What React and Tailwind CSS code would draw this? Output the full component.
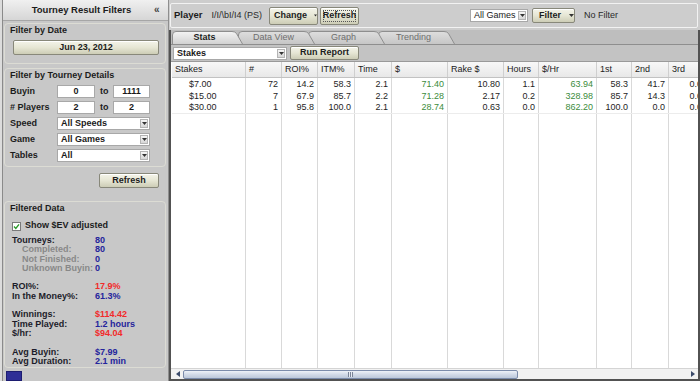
import React from 'react';

const beige =
  'bg-gradient-to-b from-[#f4f4ea] via-[#e6e6d4] to-[#cdcdb6] border border-[#88887a] rounded-[2px] shadow-[inset_0_1px_0_#ffffff]';

const Caret = ({ color = '#333' }) => (
  <svg width="5" height="3" viewBox="0 0 5 3">
    <path d="M0 0H5L2.5 3Z" fill={color} />
  </svg>
);

const Select = ({ value, className = '', bold = false }) => (
  <div className={`h-[13px] bg-white border border-[#a8a8a8] flex items-center ${className}`}>
    <span className={`flex-1 pl-[3px] text-[9px] leading-none text-[#1a1a1a] truncate ${bold ? 'font-bold' : ''}`}>
      {value}
    </span>
    <span className="w-[8px] h-[9px] mr-[1px] bg-gradient-to-b from-[#f6f6f6] to-[#d6d6d6] border border-[#b4b4b4] flex items-center justify-center">
      <Caret />
    </span>
  </div>
);

const Field = ({ value, className = '' }) => (
  <div className={`h-[13px] bg-white border border-[#a8a8a8] flex items-center justify-center text-[9px] font-bold leading-none text-[#1a1a1a] ${className}`}>
    {value}
  </div>
);

const summary = [
  { label: 'Tourneys:', value: '80', tone: 'blue' },
  { label: 'Completed:', value: '80', tone: 'blue', sub: true },
  { label: 'Not Finished:', value: '0', tone: 'blue', sub: true },
  { label: 'Unknown Buyin:', value: '0', tone: 'blue', sub: true },
  null,
  { label: 'ROI%:', value: '17.9%', tone: 'red' },
  { label: 'In the Money%:', value: '61.3%', tone: 'blue' },
  null,
  { label: 'Winnings:', value: '$114.42', tone: 'red' },
  { label: 'Time Played:', value: '1.2 hours', tone: 'blue' },
  { label: '$/hr:', value: '$94.04', tone: 'red' },
  null,
  { label: 'Avg Buyin:', value: '$7.99', tone: 'blue' },
  { label: 'Avg Duration:', value: '2.1 min', tone: 'blue' },
];

const columns = [
  { name: 'Stakes', w: 'w-[74px]' },
  { name: '#', w: 'w-[36px]' },
  { name: 'ROI%', w: 'w-[36px]' },
  { name: 'ITM%', w: 'w-[37px]' },
  { name: 'Time', w: 'w-[37px]' },
  { name: '$', w: 'w-[56px]', green: true },
  { name: 'Rake $', w: 'w-[56px]' },
  { name: 'Hours', w: 'w-[35px]' },
  { name: '$/Hr', w: 'w-[58px]', green: true },
  { name: '1st', w: 'w-[35px]' },
  { name: '2nd', w: 'w-[37px]' },
  { name: '3rd', w: 'w-[37px]' },
];

const rows = [
  ['$7.00', '72', '14.2', '58.3', '2.1', '71.40', '10.80', '1.1', '63.94', '58.3', '41.7', '0.0'],
  ['$15.00', '7', '67.9', '85.7', '2.2', '71.28', '2.17', '0.2', '328.98', '85.7', '14.3', '0.0'],
  ['$30.00', '1', '95.8', '100.0', '2.1', '28.74', '0.63', '0.0', '862.20', '100.0', '0.0', '0.0'],
];

const tabs = [
  { id: 'stats', label: 'Stats', active: true, cls: 'ml-[1px] w-[71px] z-[4]', w: 71 },
  { id: 'dataview', label: 'Data View', cls: '-ml-[5px] w-[77px] z-[3]', w: 77 },
  { id: 'graph', label: 'Graph', cls: '-ml-[7px] w-[77px] z-[2]', w: 77 },
  { id: 'trending', label: 'Trending', cls: '-ml-[7px] w-[77px] z-[1]', w: 77 },
];

const Tab = ({ tab }) => {
  const w = tab.w;
  const d = `M0.5 13 V4 Q0.5 0.5 4 0.5 H${w - 11} Q${w - 8} 0.5 ${w - 6.5} 2.5 L${w - 0.5} 13`;
  return (
    <div className={`relative h-[13px] shrink-0 ${tab.cls}`}>
      <svg className="absolute inset-0" width={w} height="13" viewBox={`0 0 ${w} 13`}>
        <defs>
          <linearGradient id={`tab-${tab.id}`} x1="0" y1="0" x2="0" y2="1">
            <stop offset="0" stopColor={tab.active ? '#f4f4f4' : '#dedede'} />
            <stop offset="1" stopColor={tab.active ? '#d2d2d2' : '#c6c6c6'} />
          </linearGradient>
        </defs>
        <path d={d} fill={`url(#tab-${tab.id})`} stroke="#8e8e8e" strokeWidth="1" />
      </svg>
      <div
        className={`relative h-full pr-[6px] flex items-center justify-center text-[9px] leading-none ${
          tab.active ? 'font-bold text-[#1e1e1e]' : 'text-[#6e6e6e]'
        }`}
      >
        {tab.label}
      </div>
    </div>
  );
};

const LeftPanel = () => (
  <aside className="w-[169px] shrink-0 h-full flex flex-col bg-[#dcdcdc] pl-[2px] border-r border-[#8e8e8e] overflow-hidden">
    <div className="flex-1 flex flex-col bg-[#c8c8c8] border-l border-[#8a8a8a]">
      {/* header */}
      <div className="h-[21px] shrink-0 flex items-center bg-gradient-to-b from-[#f0f0f0] to-[#d6d6d6] border-b border-[#a6a6a6]">
        <span className="flex-1 text-center pl-[6px] text-[9.5px] font-bold text-[#1c1c1c]">Tourney Result Filters</span>
        <span className="w-[14px] text-[10px] font-bold leading-none text-[#444]">«</span>
      </div>

      {/* filter by date */}
      <div className="mt-[2px] ml-[1px] mr-[2px] border border-[#dcdcd4] rounded-[4px] pt-[1px] pb-[8px]">
        <div className="h-[11px] pl-[5px] text-[9px] leading-[11px] font-bold text-[#1c1c1c]">Filter by Date</div>
        <div className={`${beige} mt-[4px] ml-[8px] w-[146px] h-[15px] flex items-center justify-center text-[9px] font-bold text-[#1c1c1c]`}>
          Jun 23, 2012
        </div>
      </div>

      {/* filter by tourney details */}
      <div className="mt-[4px] ml-[1px] mr-[2px] border border-[#dcdcd4] rounded-[4px] pt-[1px] pb-[4px]">
        <div className="h-[11px] pl-[5px] text-[9px] leading-[11px] font-bold text-[#1c1c1c]">Filter by Tourney Details</div>
        <div className="mt-[4px] flex flex-col gap-[3px] pl-[5px] text-[9px] leading-[13px] font-bold text-[#1c1c1c]">
          <div className="flex items-center h-[13px]">
            <span className="w-[47px]">Buyin</span>
            <Field value="0" className="w-[38px]" />
            <span className="w-[18px] pl-[5px]">to</span>
            <Field value="1111" className="w-[37px]" />
          </div>
          <div className="flex items-center h-[13px]">
            <span className="w-[47px]">#&nbsp;Players</span>
            <Field value="2" className="w-[38px]" />
            <span className="w-[18px] pl-[5px]">to</span>
            <Field value="2" className="w-[37px]" />
          </div>
          <div className="flex items-center h-[13px]">
            <span className="w-[47px]">Speed</span>
            <Select value="All Speeds" bold className="w-[93px]" />
          </div>
          <div className="flex items-center h-[13px]">
            <span className="w-[47px]">Game</span>
            <Select value="All Games" bold className="w-[93px]" />
          </div>
          <div className="flex items-center h-[13px]">
            <span className="w-[47px]">Tables</span>
            <Select value="All" bold className="w-[93px]" />
          </div>
        </div>
      </div>

      <div className={`${beige} mt-[6px] ml-[96px] w-[60px] h-[15px] flex items-center justify-center text-[9px] font-bold text-[#1c1c1c]`}>
        Refresh
      </div>

      {/* filtered data */}
      <div className="mt-[13px] ml-[1px] mr-[2px] flex-1 border border-[#dcdcd4] rounded-[4px] pt-[1px] pl-[7px]">
        <div className="h-[11px] -ml-[2px] text-[9px] leading-[11px] font-bold text-[#1c1c1c]">Filtered Data</div>
        <div className="mt-[7px] h-[10px] flex items-center gap-[4px] text-[9px] font-bold text-[#1c1c1c]">
          <span className="w-[9px] h-[9px] bg-white border border-[#7a7a7a] flex items-center justify-center">
            <svg width="7" height="7" viewBox="0 0 7 7">
              <path d="M1 3.6 L2.8 5.4 L6 1.4" fill="none" stroke="#2a9a2a" strokeWidth="1.4" />
            </svg>
          </span>
          Show $EV adjusted
        </div>
        <div className="mt-[5px] flex flex-col text-[9px] font-bold leading-[9.3px]">
          {summary.map((s, i) =>
            s ? (
              <div key={i} className="flex h-[9.3px] items-center whitespace-nowrap">
                <span className={`w-[83px] ${s.sub ? 'pl-[10px] text-[#888888]' : 'text-[#1c1c2a]'}`}>{s.label}</span>
                <span className={s.tone === 'red' ? 'text-[#f22a2a]' : 'text-[#24249c]'}>{s.value}</span>
              </div>
            ) : (
              <div key={i} className="h-[9.3px]" />
            )
          )}
        </div>
      </div>
      <div className="mt-[3px] ml-[3px] w-[16px] h-[10px] shrink-0 bg-[#2e2e96] border border-[#1c1c70]" />
    </div>
  </aside>
);

const StatsTable = () => (
  <div className="flex-1 flex flex-col bg-white overflow-hidden border-t border-[#9a9a9a] pl-[1px]">
    <div className="flex h-[16px] shrink-0 bg-gradient-to-b from-[#f8f8f8] to-[#e8e8e8] border-b border-[#c2c2c2]">
      {columns.map((c) => (
        <div key={c.name} className={`${c.w} shrink-0 border-r border-[#cfcfcf] pl-[3px] flex items-center text-[9px] text-[#222]`}>
          {c.name}
        </div>
      ))}
    </div>
    {rows.map((r, ri) => (
      <div key={ri} className={`flex h-[12px] shrink-0 ${ri === rows.length - 1 ? 'border-b border-[#ececec]' : ''}`}>
        {r.map((v, ci) => (
          <div
            key={ci}
            className={`${columns[ci].w} shrink-0 border-r border-[#d9d9d9] flex items-center text-[9px] leading-none ${
              ci === 0 ? 'pl-[17px]' : 'justify-end pr-[3px]'
            } ${columns[ci].green ? 'text-[#3c8c3c]' : 'text-[#1e1e1e]'}`}
          >
            {v}
          </div>
        ))}
      </div>
    ))}
    <div className="flex flex-1">
      {columns.map((c) => (
        <div key={c.name} className={`${c.w} shrink-0 border-r border-[#d9d9d9]`} />
      ))}
    </div>
  </div>
);

const Scrollbar = () => (
  <div className="h-[11px] shrink-0 flex items-center bg-[#f2f2f2] border-t border-[#d4d4d4]">
    <svg className="ml-[5px]" width="4" height="6" viewBox="0 0 4 6">
      <path d="M4 0V6L0 3Z" fill="#3a4a6a" />
    </svg>
    <div className="ml-[3px] w-[335px] h-[9px] rounded-[2px] border border-[#7c8cab] bg-gradient-to-b from-[#eef2f8] via-[#d2dae8] to-[#bcc8da] flex items-center justify-center">
      <span className="w-[5px] h-[5px] bg-[repeating-linear-gradient(90deg,#7a8498_0_1px,#e6eaf2_1px_2px)]" />
    </div>
    <div className="flex-1" />
    <svg className="mr-[3px]" width="4" height="6" viewBox="0 0 4 6">
      <path d="M0 0V6L4 3Z" fill="#3a4a6a" />
    </svg>
  </div>
);

export default function App() {
  return (
    <div className="w-[700px] h-[381px] flex overflow-hidden bg-[#c8c8c8] [font-family:'Liberation_Sans',Arial,sans-serif]">
      <LeftPanel />
      <main className="flex-1 h-full flex flex-col min-w-0">
        {/* player bar */}
        <div className="h-[30px] shrink-0 bg-[#cdcdcd] pt-[3px] pb-[2px] pl-[1px] pr-[2px]">
          <div className="h-full border border-[#f2f2f2] rounded-[2px] flex items-center pl-[3px]">
            <span className="text-[9.5px] font-bold text-[#1c1c1c]">Player</span>
            <span className="ml-[9px] text-[9px] text-[#2a2a2a]">I/I/\bI/I4 (PS)</span>
            <div className={`${beige} ml-[7px] w-[49px] h-[18px] flex items-center pl-[4px] gap-[7px]`}>
              <span className="text-[9px] font-bold text-[#1c1c1c]">Change</span>
              <Caret />
            </div>
            <div className={`${beige} ml-[2px] w-[39px] h-[18px] p-[2px]`}>
              <div className="h-full border border-dotted border-[#555] flex items-center justify-center text-[9px] font-bold text-[#1c1c1c]">
                Refresh
              </div>
            </div>
            <Select value="All Games" className="ml-[111px] w-[58px] h-[13px]" />
            <div className={`${beige} ml-[4px] w-[43px] h-[15px] flex items-center pl-[6px] gap-[8px]`}>
              <span className="text-[9px] font-bold text-[#1c1c1c]">Filter</span>
              <Caret />
            </div>
            <span className="ml-[9px] text-[9px] text-[#2a2a2a]">No Filter</span>
          </div>
        </div>

        <div className="flex-1 flex flex-col min-h-0 border-l-2 border-r-2 border-b-2 border-[#525252]">
          {/* tabs */}
          <div className="h-[14px] shrink-0 flex items-end bg-[#bebebe] overflow-hidden">
            {tabs.map((t) => (
              <Tab key={t.id} tab={t} />
            ))}
          </div>
          {/* report toolbar */}
          <div className="h-[17px] shrink-0 flex items-center bg-[#c3c3c3] border-t border-[#8e8e8e] pl-[2px]">
            <Select value="Stakes" bold className="w-[114px] h-[13px]" />
            <div className={`${beige} ml-[3px] w-[69px] h-[14px] flex items-center justify-center text-[9px] font-bold text-[#1c1c1c]`}>
              Run Report
            </div>
          </div>
          <StatsTable />
          <Scrollbar />
        </div>
      </main>
    </div>
  );
}
